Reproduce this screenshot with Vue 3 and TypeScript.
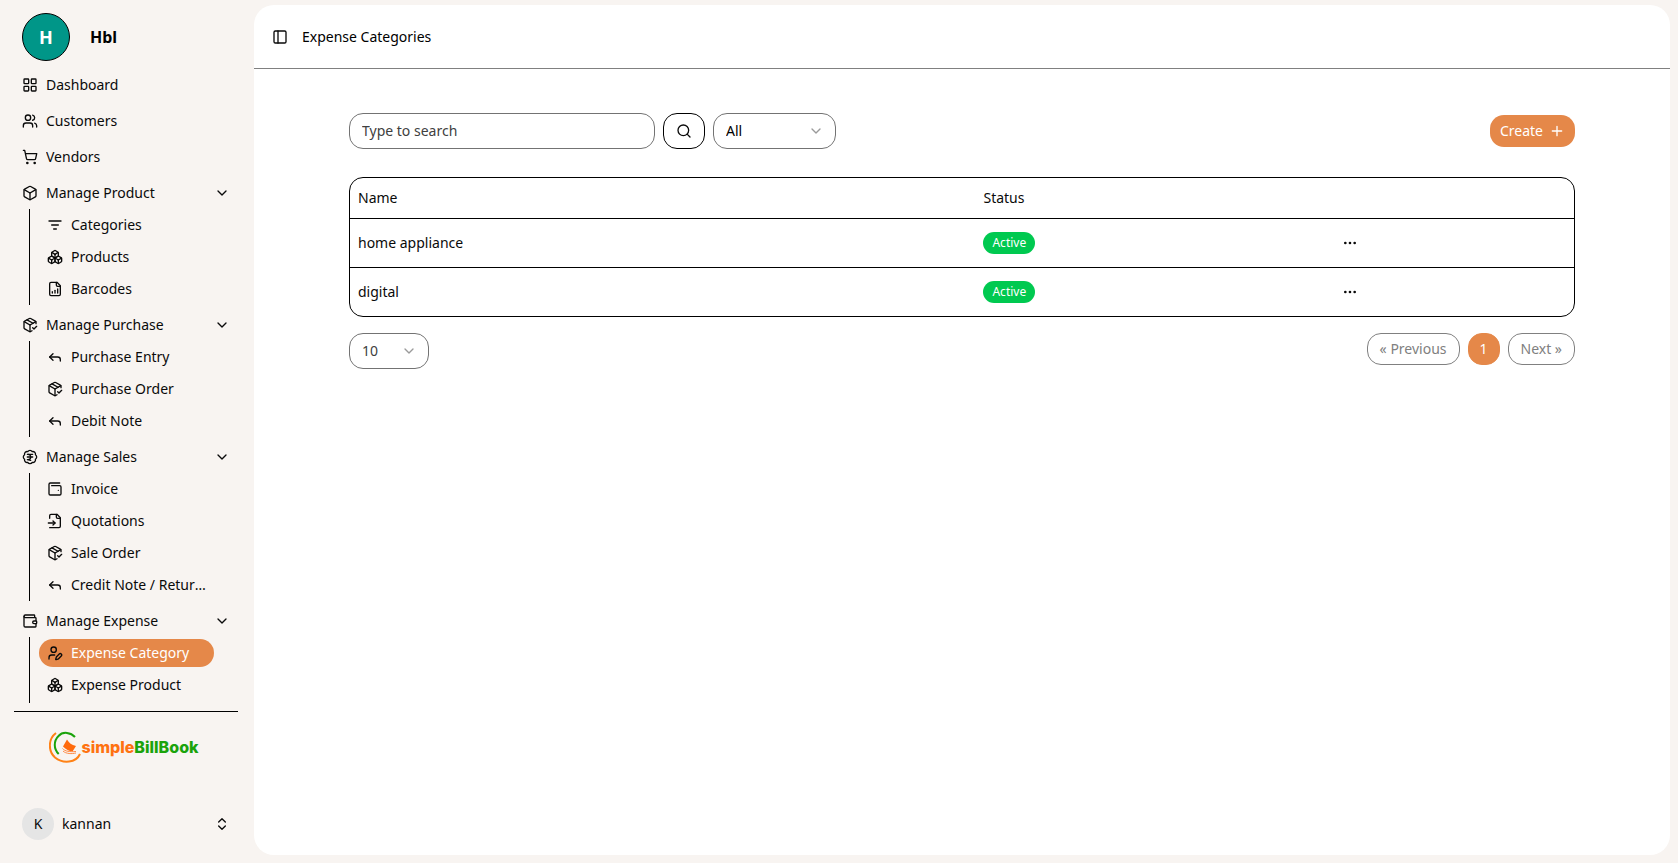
<script setup lang="ts">
import { computed, ref } from 'vue'

interface SubItem {
  label: string
  icon: string
  active?: boolean
}
interface Item {
  label: string
  icon: string
  children?: SubItem[]
}

const icons: Record<string, string[]> = {
  grid: [
    'M4 3h5a1 1 0 0 1 1 1v5a1 1 0 0 1-1 1H4a1 1 0 0 1-1-1V4a1 1 0 0 1 1-1Z',
    'M15 3h5a1 1 0 0 1 1 1v5a1 1 0 0 1-1 1h-5a1 1 0 0 1-1-1V4a1 1 0 0 1 1-1Z',
    'M15 14h5a1 1 0 0 1 1 1v5a1 1 0 0 1-1 1h-5a1 1 0 0 1-1-1v-5a1 1 0 0 1 1-1Z',
    'M4 14h5a1 1 0 0 1 1 1v5a1 1 0 0 1-1 1H4a1 1 0 0 1-1-1v-5a1 1 0 0 1 1-1Z',
  ],
  users: [
    'M16 21v-2a4 4 0 0 0-4-4H6a4 4 0 0 0-4 4v2',
    'M5 7a4 4 0 1 0 8 0a4 4 0 1 0-8 0',
    'M22 21v-2a4 4 0 0 0-3-3.87',
    'M16 3.13a4 4 0 0 1 0 7.75',
  ],
  cart: [
    'M7 21a1 1 0 1 0 2 0a1 1 0 1 0-2 0',
    'M18 21a1 1 0 1 0 2 0a1 1 0 1 0-2 0',
    'M2.05 2.05h2l2.66 12.42a2 2 0 0 0 2 1.58h9.78a2 2 0 0 0 1.95-1.57l1.65-7.43H5.12',
  ],
  box: [
    'M21 8a2 2 0 0 0-1-1.73l-7-4a2 2 0 0 0-2 0l-7 4A2 2 0 0 0 3 8v8a2 2 0 0 0 1 1.73l7 4a2 2 0 0 0 2 0l7-4A2 2 0 0 0 21 16Z',
    'm3.3 7 8.7 5 8.7-5',
    'M12 22V12',
  ],
  filter: ['M3 6h18', 'M7 12h10', 'M10 18h4'],
  boxes: [
    'M2.97 12.92A2 2 0 0 0 2 14.63v3.24a2 2 0 0 0 .97 1.71l3 1.8a2 2 0 0 0 2.06 0L12 19v-5.5l-5-3-4.03 2.42Z',
    'm7 16.5-4.74-2.85',
    'm7 16.5 5-3',
    'M7 16.5v5.17',
    'M12 13.5V19l3.97 2.38a2 2 0 0 0 2.06 0l3-1.8a2 2 0 0 0 .97-1.71v-3.24a2 2 0 0 0-.97-1.71L17 10.5l-5 3Z',
    'm17 16.5-5-3',
    'm17 16.5 4.74-2.85',
    'M17 16.5v5.17',
    'M7.97 4.42A2 2 0 0 0 7 6.13v4.37l5 3 5-3V6.13a2 2 0 0 0-.97-1.71l-3-1.8a2 2 0 0 0-2.06 0l-3 1.8Z',
    'M12 8 7.26 5.15',
    'm12 8 4.74-2.85',
    'M12 13.5V8',
  ],
  fileChart: [
    'M15 2H6a2 2 0 0 0-2 2v16a2 2 0 0 0 2 2h12a2 2 0 0 0 2-2V7Z',
    'M14 2v4a2 2 0 0 0 2 2h4',
    'M8 18v-2',
    'M12 18v-4',
    'M16 18v-6',
  ],
  packageCheck: [
    'm16 16 2 2 4-4',
    'M21 10V8a2 2 0 0 0-1-1.73l-7-4a2 2 0 0 0-2 0l-7 4A2 2 0 0 0 3 8v8a2 2 0 0 0 1 1.73l7 4a2 2 0 0 0 2 0l2-1.14',
    'm7.5 4.27 9 5.15',
    'M3.29 7 12 12l8.71-5',
    'M12 22V12',
  ],
  reply: ['m9 17-5-5 5-5', 'M20 18v-2a4 4 0 0 0-4-4H4'],
  rupee: [
    'M3.85 8.62a4 4 0 0 1 4.78-4.77 4 4 0 0 1 6.74 0 4 4 0 0 1 4.78 4.78 4 4 0 0 1 0 6.74 4 4 0 0 1-4.77 4.78 4 4 0 0 1-6.75 0 4 4 0 0 1-4.78-4.77 4 4 0 0 1 0-6.76Z',
    'M8 8h8',
    'M8 12h8',
    'm13 17-5-1h1a4 4 0 0 0 0-8',
  ],
  walletMinimal: [
    'M17 14h.01',
    'M7 7h12a2 2 0 0 1 2 2v10a2 2 0 0 1-2 2H5a2 2 0 0 1-2-2V5a2 2 0 0 1 2-2h14',
  ],
  fileInput: [
    'M4 22h14a2 2 0 0 0 2-2V7l-5-5H6a2 2 0 0 0-2 2v4',
    'M14 2v4a2 2 0 0 0 2 2h4',
    'M2 15h10',
    'm9 18 3-3-3-3',
  ],
  wallet: [
    'M19 7V4a1 1 0 0 0-1-1H5a2 2 0 0 0 0 4h15a1 1 0 0 1 1 1v4h-3a2 2 0 0 0 0 4h3a1 1 0 0 0 1-1v-2a1 1 0 0 0-1-1',
    'M3 5v14a2 2 0 0 0 2 2h15a1 1 0 0 0 1-1v-4',
  ],
  userPen: [
    'M11.5 15H7a4 4 0 0 0-4 4v2',
    'M21.378 16.626a1 1 0 0 0-3.004-3.004l-4.01 4.012a2 2 0 0 0-.506.854l-.837 2.87a.5.5 0 0 0 .62.62l2.87-.837a2 2 0 0 0 .854-.506z',
    'M6 7a4 4 0 1 0 8 0a4 4 0 1 0-8 0',
  ],
}

const menu: Item[] = [
  { label: 'Dashboard', icon: 'grid' },
  { label: 'Customers', icon: 'users' },
  { label: 'Vendors', icon: 'cart' },
  {
    label: 'Manage Product',
    icon: 'box',
    children: [
      { label: 'Categories', icon: 'filter' },
      { label: 'Products', icon: 'boxes' },
      { label: 'Barcodes', icon: 'fileChart' },
    ],
  },
  {
    label: 'Manage Purchase',
    icon: 'packageCheck',
    children: [
      { label: 'Purchase Entry', icon: 'reply' },
      { label: 'Purchase Order', icon: 'packageCheck' },
      { label: 'Debit Note', icon: 'reply' },
    ],
  },
  {
    label: 'Manage Sales',
    icon: 'rupee',
    children: [
      { label: 'Invoice', icon: 'walletMinimal' },
      { label: 'Quotations', icon: 'fileInput' },
      { label: 'Sale Order', icon: 'packageCheck' },
      { label: 'Credit Note / Returns', icon: 'reply' },
    ],
  },
  {
    label: 'Manage Expense',
    icon: 'wallet',
    children: [
      { label: 'Expense Category', icon: 'userPen', active: true },
      { label: 'Expense Product', icon: 'boxes' },
    ],
  },
]

const collapsed = ref<string[]>([])
function toggle(label: string) {
  collapsed.value = collapsed.value.includes(label)
    ? collapsed.value.filter((l) => l !== label)
    : [...collapsed.value, label]
}

const search = ref('')
const status = ref('All')
const pageSize = ref('10')
const categories = [
  { name: 'home appliance', status: 'Active' },
  { name: 'digital', status: 'Active' },
]
const rows = computed(() =>
  categories.filter(
    (c) =>
      c.name.includes(search.value.toLowerCase()) &&
      (status.value === 'All' || c.status === status.value),
  ),
)
</script>

<template>
  <div class="layout">
    <aside class="sidebar">
      <div class="company">
        <span class="company-avatar">H</span>
        <strong class="company-name">Hbl</strong>
      </div>

      <nav aria-label="Main">
        <ul class="menu">
          <li v-for="item in menu" :key="item.label">
            <button
              v-if="item.children"
              type="button"
              class="menu-link"
              :aria-expanded="!collapsed.includes(item.label)"
              @click="toggle(item.label)"
            >
              <svg class="icon" viewBox="0 0 24 24" aria-hidden="true">
                <path v-for="d in icons[item.icon]" :key="d" :d="d" />
              </svg>
              <span class="label">{{ item.label }}</span>
              <svg class="icon" viewBox="0 0 24 24" aria-hidden="true"><path d="m6 9 6 6 6-6" /></svg>
            </button>
            <a v-else href="#" class="menu-link">
              <svg class="icon" viewBox="0 0 24 24" aria-hidden="true">
                <path v-for="d in icons[item.icon]" :key="d" :d="d" />
              </svg>
              <span class="label">{{ item.label }}</span>
            </a>
            <ul v-if="item.children && !collapsed.includes(item.label)" class="submenu">
              <li v-for="sub in item.children" :key="sub.label">
                <a href="#" class="sub-link" :class="{ active: sub.active }">
                  <svg class="icon" viewBox="0 0 24 24" aria-hidden="true">
                    <path v-for="d in icons[sub.icon]" :key="d" :d="d" />
                  </svg>
                  <span class="label">{{ sub.label }}</span>
                </a>
              </li>
            </ul>
          </li>
        </ul>
      </nav>

      <div class="brand">
        <svg class="brand-mark" viewBox="0 0 32 32" aria-hidden="true">
          <path class="ring orange" d="M7 2C-1 8-1 20 6 26.500C14 33 27 32 31 23" />
          <path class="ring green" d="M26 6C22 1.500 14 0 9.500 5C4.500 10 4.500 18 9.700 23" />
          <path class="bill" d="M18 8.500C20 12 22.500 14 27 15L23.500 20.500C20 20 17 18.500 14 15.500Z" />
          <path class="swoosh" d="M13.500 17.500C16 20.500 21 21 27 20.500M14 20c3 3 9 3 13 2" />
        </svg>
        <span class="brand-text"><span class="orange-text">simple</span><span class="green-text">BillBook</span></span>
      </div>

      <button type="button" class="account">
        <span class="account-avatar">K</span>
        <span class="label">kannan</span>
        <svg class="icon" viewBox="0 0 24 24" aria-hidden="true">
          <path d="m7 15 5 5 5-5" />
          <path d="m7 9 5-5 5 5" />
        </svg>
      </button>
    </aside>

    <main class="panel">
      <header class="topbar">
        <button type="button" class="icon-button" aria-label="Toggle sidebar">
          <svg class="icon" viewBox="0 0 24 24" aria-hidden="true">
            <rect x="3" y="3" width="18" height="18" rx="2" />
            <path d="M9 3v18" />
          </svg>
        </button>
        <h1>Expense Categories</h1>
      </header>

      <div class="content">
        <form class="toolbar" @submit.prevent>
          <input v-model="search" class="field search" type="text" placeholder="Type to search" aria-label="Search" />
          <button type="submit" class="search-button" aria-label="Search">
            <svg class="icon" viewBox="0 0 24 24" aria-hidden="true">
              <circle cx="11" cy="11" r="8" />
              <path d="m21 21-4.300-4.300" />
            </svg>
          </button>
          <div class="select status">
            <select v-model="status" class="field" aria-label="Status">
              <option>All</option>
              <option>Active</option>
            </select>
            <svg class="icon" viewBox="0 0 24 24" aria-hidden="true"><path d="m6 9 6 6 6-6" /></svg>
          </div>
          <button type="button" class="create">
            Create
            <svg class="icon" viewBox="0 0 24 24" aria-hidden="true"><path d="M5 12h14M12 5v14" /></svg>
          </button>
        </form>

        <div class="table-box">
          <table>
            <colgroup>
              <col class="col-name" />
              <col class="col-status" />
              <col />
            </colgroup>
            <thead>
              <tr>
                <th scope="col">Name</th>
                <th scope="col">Status</th>
                <th scope="col" aria-label="Actions"></th>
              </tr>
            </thead>
            <tbody>
              <tr v-for="row in rows" :key="row.name">
                <td>{{ row.name }}</td>
                <td><span class="badge">{{ row.status }}</span></td>
                <td>
                  <button type="button" class="icon-button" :aria-label="`Actions for ${row.name}`">
                    <svg class="icon" viewBox="0 0 24 24" aria-hidden="true">
                      <circle cx="12" cy="12" r="1" />
                      <circle cx="19" cy="12" r="1" />
                      <circle cx="5" cy="12" r="1" />
                    </svg>
                  </button>
                </td>
              </tr>
            </tbody>
          </table>
        </div>

        <div class="table-footer">
          <div class="select size">
            <select v-model="pageSize" class="field" aria-label="Rows per page">
              <option>10</option>
              <option>20</option>
            </select>
            <svg class="icon" viewBox="0 0 24 24" aria-hidden="true"><path d="m6 9 6 6 6-6" /></svg>
          </div>
          <nav class="pagination" aria-label="Pagination">
            <button type="button" class="page" disabled>« Previous</button>
            <button type="button" class="page current" aria-current="page">1</button>
            <button type="button" class="page" disabled>Next »</button>
          </nav>
        </div>
      </div>
    </main>
  </div>
</template>

<style>
body {
  margin: 0;
  background: #f8f4f1;
}
</style>

<style scoped>
.layout {
  --accent: #e58849;
  display: grid;
  grid-template-columns: 254px minmax(0, 1fr);
  min-height: 100vh;
  background: #f8f4f1;
  color: #0a0a0a;
  font: 14px/20px "Noto Sans", sans-serif;
}
.layout *,
.layout {
  box-sizing: border-box;
}
button,
input,
select {
  margin: 0;
  padding: 0;
  border: 0;
  background: none;
  color: inherit;
  font: inherit;
}
button {
  cursor: pointer;
}
a {
  color: inherit;
  text-decoration: none;
}
ul {
  margin: 0;
  padding: 0;
  list-style: none;
}
.icon {
  flex: none;
  width: 16px;
  height: 16px;
  fill: none;
  stroke: currentColor;
  stroke-width: 2;
  stroke-linecap: round;
  stroke-linejoin: round;
}

.sidebar {
  display: flex;
  flex-direction: column;
  padding: 13px 16px 15px 14px;
}
.company {
  display: flex;
  align-items: center;
  gap: 20px;
  padding: 0 8px 8px;
}
.company-avatar {
  display: grid;
  place-items: center;
  width: 48px;
  height: 48px;
  border: 1px solid #000;
  border-radius: 50%;
  background: #009688;
  color: #fff;
  font-size: 18px;
  font-weight: 700;
}
.company-name {
  color: #000;
  font-size: 16px;
}
.menu {
  display: flex;
  flex-direction: column;
  gap: 4px;
}
.menu-link {
  display: flex;
  align-items: center;
  gap: 8px;
  width: 100%;
  height: 32px;
  padding: 0 8px;
  text-align: left;
}
.label {
  flex: 1;
  min-width: 0;
  overflow: hidden;
  text-overflow: ellipsis;
  white-space: nowrap;
  text-align: left;
}
.submenu {
  display: flex;
  flex-direction: column;
  gap: 4px;
  margin: 0 24px 0 15px;
  padding: 2px 0 2px 9px;
  border-left: 1px solid #000;
}
.menu > li:last-child .submenu {
  padding-bottom: 4px;
}
.sub-link {
  display: flex;
  align-items: center;
  gap: 8px;
  height: 28px;
  padding: 0 8px;
  border-radius: 14px;
}
.sub-link.active {
  background: var(--accent);
}
.sub-link.active .label {
  color: #fff;
}
.brand {
  display: flex;
  align-items: center;
  justify-content: center;
  margin-top: 8px;
  padding: 19px 4px 19px 0;
  border-top: 1px solid #000;
}
.brand-mark {
  width: 32px;
  height: 32px;
}
.ring {
  fill: none;
  stroke-width: 2;
}
.orange {
  stroke: #ff8216;
}
.green {
  stroke: #1ba30b;
}
.bill {
  fill: #ff6a0c;
}
.swoosh {
  fill: none;
  stroke: #ff8a45;
  stroke-width: 1;
}
.brand-text {
  font-family: Inter, sans-serif;
  font-size: 16px;
  font-weight: 800;
}
.orange-text {
  color: #ff7211;
}
.green-text {
  color: #1ba30b;
}
.account {
  display: flex;
  align-items: center;
  gap: 8px;
  width: 100%;
  margin-top: auto;
  padding: 8px;
}
.account-avatar {
  display: grid;
  place-items: center;
  width: 32px;
  height: 32px;
  border-radius: 50%;
  background: #e5e5e5;
}

.panel {
  min-width: 0;
  margin: 5px 8px 8px 0;
  border-radius: 20px;
  background: #fff;
}
.topbar {
  display: flex;
  align-items: center;
  gap: 8px;
  height: 64px;
  padding: 0 12px;
  border-bottom: 1px solid #808080;
}
.icon-button {
  display: grid;
  place-items: center;
  width: 28px;
  height: 28px;
}
h1 {
  margin: 0;
  color: #000;
  font-size: 14px;
  font-weight: 400;
}
.content {
  padding: 44px 95px;
}
.toolbar {
  display: flex;
  align-items: center;
  gap: 8px;
}
.field {
  width: 100%;
  height: 36px;
  padding: 0 12px;
  border: 1px solid #737373;
  border-radius: 14px;
  background: #fff;
  appearance: none;
}
.search {
  width: 306px;
  padding-bottom: 2px;
}
.search::placeholder {
  color: #404040;
  opacity: 1;
}
.search-button {
  display: grid;
  place-items: center;
  width: 42px;
  height: 36px;
  border: 1px solid #000;
  border-radius: 14px;
}
.select {
  display: grid;
  align-items: center;
}
.select > * {
  grid-area: 1 / 1;
}
.select .icon {
  justify-self: end;
  margin-right: 12px;
  color: #9a9a9a;
  pointer-events: none;
}
.status {
  width: 123px;
  color: #000;
}
.size {
  width: 80px;
  color: #404040;
}
.create {
  display: flex;
  align-items: center;
  gap: 6px;
  height: 32px;
  margin-left: auto;
  padding: 0 10px;
  border-radius: 14px;
  background: var(--accent);
  color: #fff;
}
.table-box {
  margin-top: 28px;
  overflow: hidden;
  border: 1px solid #000;
  border-radius: 14px;
}
table {
  width: 100%;
  border-spacing: 0;
  table-layout: fixed;
}
.col-name {
  width: 51.1%;
}
.col-status {
  width: 28.6%;
}
th,
td {
  height: 49px;
  padding: 0 8px;
  border-bottom: 1px solid #000;
  font-weight: 400;
  text-align: left;
  vertical-align: middle;
}
th {
  height: 41px;
}
tbody tr:last-child td {
  height: 48px;
  border-bottom: 0;
}
td .icon-button {
  width: 32px;
  height: 32px;
}
.badge {
  display: inline-block;
  padding: 3px 9px;
  border-radius: 11px;
  background: #00c950;
  color: #fff;
  font-size: 12px;
  line-height: 16px;
  vertical-align: middle;
}
.table-footer {
  display: flex;
  align-items: flex-start;
  justify-content: space-between;
  margin-top: 16px;
}
.pagination {
  display: flex;
  gap: 8px;
}
.page {
  min-width: 32px;
  height: 32px;
  padding: 0 12px;
  border: 1px solid #808080;
  border-radius: 14px;
  color: #808080;
}
.page.current {
  border-color: var(--accent);
  background: var(--accent);
  padding: 0;
  color: #fff;
}
</style>
